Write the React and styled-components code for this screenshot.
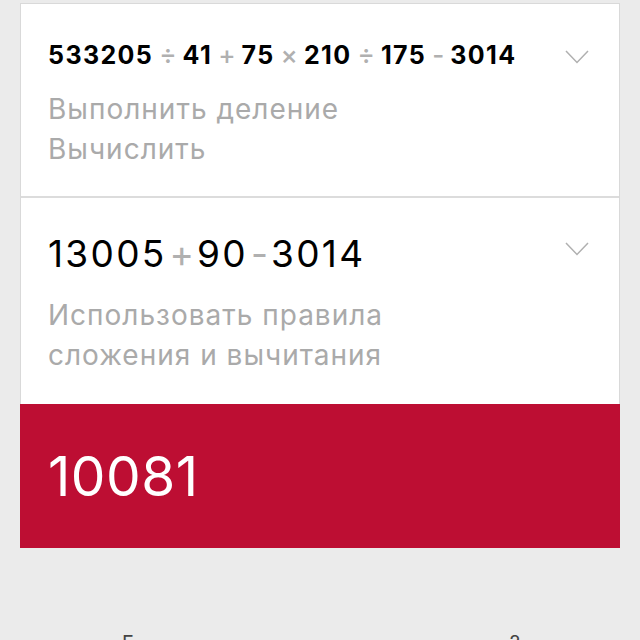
import React from 'react';
import styled, { createGlobalStyle } from 'styled-components';

const GlobalStyle = createGlobalStyle`
  html, body {
    margin: 0;
    padding: 0;
    background: #ebebeb;
    font-family: Inter, "Noto Sans", "Liberation Sans", sans-serif;
    overflow: hidden;
  }
`

const Page = styled.div`
  width: 640px;
  height: 640px;
  box-sizing: border-box;
  padding: 3px 20px 0;
  display: flex;
  flex-direction: column;
  overflow: hidden;
  & > * {
    flex: none;
  }
`
const Card = styled.div`
  background: #fff;
  border: 1px solid #d9d9d9;
  border-bottom: none;
`
const Step = styled.div`
  height: ${p => p.height}px;
  box-sizing: border-box;
  padding: ${p => p.top}px 30px 0 27px;
  display: flex;
  align-items: flex-start;
  justify-content: space-between;
  border-bottom: ${p => (p.divider ? '2px solid #dcdcdc' : 'none')};
`
const StepBody = styled.div`
  display: flex;
  flex-direction: column;
`
const Expr = styled.div`
  display: flex;
  align-items: center;
  color: #000;
  font-size: ${p => p.size}px;
  font-weight: ${p => (p.bold ? 700 : 400)};
  letter-spacing: ${p => p.spacing}px;
  line-height: 1.2;
`
const Op = styled.span`
  color: #b0b0b0;
  font-weight: ${p => p.weight};
  letter-spacing: 0;
  margin: 0 ${p => p.gap}px;
  font-size: ${p => p.size}px;
`
const Hint = styled.div`
  margin-top: ${p => p.top}px;
  color: #aaaaaa;
  font-size: 28px;
  line-height: 40px;
  letter-spacing: 1px;
`
const Chevron = styled.svg`
  flex: none;
  margin-top: ${p => p.top}px;
`
const Result = styled.div`
  height: 144px;
  box-sizing: border-box;
  padding: 0 0 0 28px;
  display: flex;
  align-items: center;
  background: #bd0e33;
  color: #fff;
  font-size: 55px;
  font-weight: 400;
  letter-spacing: 0.5px;
`
const Tabs = styled.div`
  display: flex;
  justify-content: space-between;
  padding: 83px 100px 0 102px;
  color: #444;
  font-size: 20px;
`

const Arrow = ({top}) => (
  <Chevron top={top} width="24" height="14" viewBox="0 0 24 14">
    <path d="M1 1 L12 12.5 L23 1" fill="none" stroke="#b0b0b0" strokeWidth="1.5" />
  </Chevron>
)

function Expression({parts, size, opSize, opWeight, gap, bold, spacing}){
  return(
    <Expr size={size} bold={bold} spacing={spacing}>
      {parts.map((p, i) =>
        i % 2
          ? <Op key={i} gap={gap} size={opSize} weight={opWeight}>{p}</Op>
          : <span key={i}>{p}</span>
      )}
    </Expr>
  );
}

export default function App(){
  return(
    <>
      <GlobalStyle />
      <Page>
        <Card>
          <Step height={194} top={35} divider>
            <StepBody>
              <Expression
                parts={['533205', '÷', '41', '+', '75', '×', '210', '÷', '175', '-', '3014']}
                size={25} opSize={26} opWeight={500} gap={6} bold spacing={1.4}
              />
              <Hint top={19}>Выполнить деление<br />Вычислить</Hint>
            </StepBody>
            <Arrow top={11} />
          </Step>
          <Step height={206} top={34}>
            <StepBody>
              <Expression
                parts={['13005', '+', '90', '-', '3014']}
                size={37} opSize={37} opWeight={400} gap={3} spacing={2.3}
              />
              <Hint top={19}>Использовать правила<br />сложения и вычитания</Hint>
            </StepBody>
            <Arrow top={10} />
          </Step>
        </Card>
        <Result>10081</Result>
        <Tabs>
          <span>Б</span>
          <span>?</span>
        </Tabs>
      </Page>
    </>
  );
}
